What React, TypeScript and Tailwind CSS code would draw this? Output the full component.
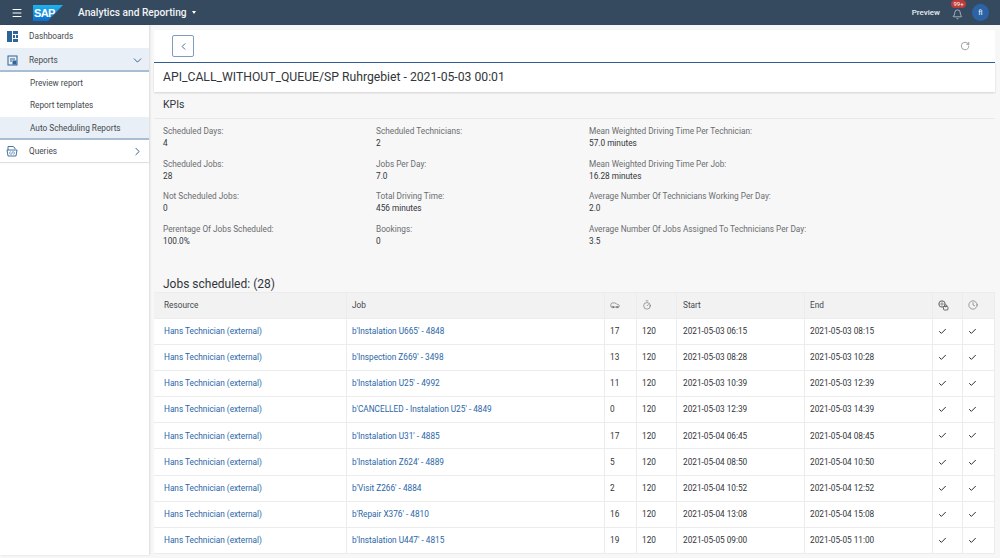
import { Check, ChevronDown, ChevronLeft, ChevronRight, Menu, Bell, RotateCw, Timer, Clock, Car } from 'lucide-react';

const font = { fontFamily: 'Roboto, sans-serif' };

const kpis = [
  [
    ['Scheduled Days:', '4'],
    ['Scheduled Jobs:', '28'],
    ['Not Scheduled Jobs:', '0'],
    ['Perentage Of Jobs Scheduled:', '100.0%'],
  ],
  [
    ['Scheduled Technicians:', '2'],
    ['Jobs Per Day:', '7.0'],
    ['Total Driving Time:', '456 minutes'],
    ['Bookings:', '0'],
  ],
  [
    ['Mean Weighted Driving Time Per Technician:', '57.0 minutes'],
    ['Mean Weighted Driving Time Per Job:', '16.28 minutes'],
    ['Average Number Of Technicians Working Per Day:', '2.0'],
    ['Average Number Of Jobs Assigned To Technicians Per Day:', '3.5'],
  ],
];

const jobs = [
  ["b'Instalation U665' - 4848", '17', '2021-05-03 06:15', '2021-05-03 08:15'],
  ["b'Inspection Z669' - 3498", '13', '2021-05-03 08:28', '2021-05-03 10:28'],
  ["b'Instalation U25' - 4992", '11', '2021-05-03 10:39', '2021-05-03 12:39'],
  ["b'CANCELLED - Instalation U25' - 4849", '0', '2021-05-03 12:39', '2021-05-03 14:39'],
  ["b'Instalation U31' - 4885", '17', '2021-05-04 06:45', '2021-05-04 08:45'],
  ["b'Instalation Z624' - 4889", '5', '2021-05-04 08:50', '2021-05-04 10:50'],
  ["b'Visit Z266' - 4884", '2', '2021-05-04 10:52', '2021-05-04 12:52'],
  ["b'Repair X376' - 4810", '16', '2021-05-04 13:08', '2021-05-04 15:08'],
  ["b'Instalation U447' - 4815", '19', '2021-05-05 09:00', '2021-05-05 11:00'],
];

const cols = 'grid grid-cols-[193px_258px_32px_40px_128px_128px_30px_32px]';
const cell = 'flex items-center pl-[5px] border-r border-[#ececec] overflow-hidden whitespace-nowrap';

const DashIcon = () => (
  <svg width="11" height="11" viewBox="0 0 11 11" fill="#2f6497">
    <rect x="0" y="0" width="5" height="11" />
    <rect x="6" y="0" width="5" height="3" />
    <rect x="6" y="4" width="2" height="3" />
    <rect x="9" y="4" width="2" height="3" />
    <rect x="6" y="8" width="5" height="3" />
  </svg>
);

const ReportIcon = () => (
  <svg width="11" height="11" viewBox="0 0 11 11" fill="none" stroke="#2f6497" strokeWidth="1">
    <rect x="1" y="1" width="9" height="9" />
    <path d="M3 4h5M3 6h2" />
    <rect x="6" y="6" width="3" height="3" fill="#2f6497" />
  </svg>
);

const QueryIcon = () => (
  <svg width="12" height="12" viewBox="0 0 12 12" fill="none" stroke="#2f6497" strokeWidth="0.9">
    <path d="M2 5V1.500h5L9 3v1" />
    <path d="M1 5l1 6h8l1-6z" />
    <path d="M4.500 6.500L3.500 8l1 1.500M7.500 6.500L8.500 8l-1 1.500M6.500 6.500L5.500 9.500" strokeWidth="0.7" />
  </svg>
);

const SapLogo = () => (
  <svg width="30" height="16" viewBox="0 0 30 16">
    <defs>
      <linearGradient id="sap" x1="0" y1="0" x2="0" y2="1">
        <stop offset="0" stopColor="#1eb4ee" />
        <stop offset="1" stopColor="#0a6ed1" />
      </linearGradient>
    </defs>
    <path d="M0 0h30L15 16H0z" fill="url(#sap)" />
    <text x="1" y="12" fontSize="11" fontWeight="800" fill="#fff" fontFamily="Liberation Sans, sans-serif" letterSpacing="-0.6">
      SAP
    </text>
  </svg>
);

const PinIcon = () => (
  <svg width="11" height="11" viewBox="0 0 11 11" fill="none" stroke="#44494e" strokeWidth="0.8">
    <circle cx="4" cy="4" r="3.200" />
    <path d="M1 4h6M4 1v6" strokeWidth="0.5" />
    <rect x="5.500" y="6.500" width="4.500" height="3.500" rx="1" fill="#f2f2f2" />
    <circle cx="7.800" cy="5.800" r="1" fill="#f2f2f2" />
  </svg>
);

export default function App() {
  return (
    <div className="w-[1000px] h-[558px] overflow-hidden flex flex-col bg-[#f7f7f7] text-[#32363a]" style={font}>
      <header className="h-[25px] shrink-0 bg-[#354a5f] flex items-center text-white">
        <Menu className="ml-[11px] w-[12px] h-[12px]" strokeWidth={2} />
        <div className="ml-[10px] flex"><SapLogo /></div>
        <span className="ml-[15px] text-[10.200px] font-medium text-[#f2f4f6]">Analytics and Reporting</span>
        <span className="ml-[5px] w-0 h-0 border-x-[2.500px] border-x-transparent border-t-[3px] border-t-white" />
        <span className="ml-auto text-[8px] font-medium text-[#e8edf2]">Preview</span>
        <div className="relative ml-[12px] w-[11px] h-[11px] mt-[3px]">
          <Bell className="w-[11px] h-[11px]" strokeWidth={1.200} />
          <span className="absolute -top-[9px] -left-[1px] h-[8px] px-[2.500px] rounded-[4px] bg-[#bb3b3b] text-[6px] leading-[8px] text-white">99+</span>
        </div>
        <div className="ml-[9px] mr-[11px] w-[17px] h-[17px] rounded-full bg-[#2c63a6] flex items-center justify-center text-[7.500px]">fl</div>
      </header>
      <div className="flex flex-1 min-h-0">
        <aside className="w-[149px] shrink-0 h-[530px] bg-white shadow-[1px_0_2px_rgba(0,0,0,0.12)] text-[8.250px] text-[#44494e]">
          <div className="h-[23px] flex items-center">
            <span className="ml-[7px] w-[22px] flex"><DashIcon /></span>Dashboards
          </div>
          <div className="h-[24px] pt-[2px] flex items-center bg-[#e9eff6] border-b-2 border-[#a9bdd2]">
            <span className="ml-[7px] w-[22px] flex"><ReportIcon /></span>Reports
            <ChevronDown className="ml-auto mr-[5px] w-[13px] h-[13px] text-[#2f6497]" strokeWidth={1.800} />
          </div>
          <div className="h-[22px] flex items-center pl-[30px]">Preview report</div>
          <div className="h-[23px] flex items-center pl-[30px]">Report templates</div>
          <div className="h-[23px] pt-[2px] flex items-center pl-[30px] bg-[#e9eff6] border-b-2 border-[#a9bdd2]">Auto Scheduling Reports</div>
          <div className="h-[22px] flex items-center shadow-[0_1px_1px_rgba(0,0,0,0.12)]">
            <span className="ml-[6px] w-[23px] flex"><QueryIcon /></span>Queries
            <ChevronRight className="ml-auto mr-[5px] w-[13px] h-[13px] text-[#2f6497]" strokeWidth={1.800} />
          </div>
        </aside>
        <main className="flex-1 min-w-0 pl-[5px] pr-[5px] pt-[5px]">
          <div className="bg-white h-[33px] border-b border-[#2f5f93] flex items-center pl-[18px] pr-[25px] justify-between">
            <button className="w-[22px] h-[22px] rounded-[2px] border border-[#7f9cc0] flex items-center justify-center text-[#2f5f93]">
              <ChevronLeft className="w-[11px] h-[11px]" strokeWidth={2} />
            </button>
            <RotateCw className="w-[10px] h-[10px] text-[#6a6d70]" strokeWidth={1.500} />
          </div>
          <div className="bg-white h-[29px] flex items-center pl-[9px] text-[12.200px] shadow-[0_1px_2px_rgba(0,0,0,0.15)]">
            API_CALL_WITHOUT_QUEUE/SP Ruhrgebiet - 2021-05-03 00:01
          </div>
          <div className="h-[27px] flex items-center pl-[9px] text-[10.500px] border-b border-[#e8e8e8]">KPIs</div>
          <div className="grid grid-cols-[213px_213px_1fr] pl-[9px] pt-[6px] text-[8.250px] leading-[12px]">
            {kpis.map((col, i) => (
              <div key={i} className="flex flex-col gap-[8.500px]">
                {col.map(([label, value]) => (
                  <div key={label}>
                    <div className="text-[#6a6d70]">{label}</div>
                    <div>{value}</div>
                  </div>
                ))}
              </div>
            ))}
          </div>
          <h2 className="mt-[29px] pl-[9px] text-[12px] leading-[16px] font-normal">Jobs scheduled: (28)</h2>
          <div className="text-[8.250px]">
            <div className={`${cols} h-[27px] bg-[#f2f2f2] border-y border-[#ececec] text-[#44494e]`}>
              <div className={`${cell} pl-[10px]`}>Resource</div>
              <div className={cell}>Job</div>
              <div className={cell}><Car className="w-[10px] h-[10px] text-[#44494e]" strokeWidth={1.200} /></div>
              <div className={cell}><Timer className="w-[10px] h-[10px] text-[#44494e]" strokeWidth={1.200} /></div>
              <div className={`${cell} pl-[6px]`}>Start</div>
              <div className={cell}>End</div>
              <div className={cell}><PinIcon /></div>
              <div className={cell}><Clock className="w-[10px] h-[10px] text-[#44494e]" strokeWidth={1.200} /></div>
            </div>
            {jobs.map(([job, drive, start, end]) => (
              <div key={job} className={`${cols} h-[26.200px] bg-white border-b border-[#ececec]`}>
                <div className={`${cell} pl-[10px] text-[#2a66a8]`}>Hans Technician (external)</div>
                <div className={`${cell} text-[#2a66a8]`}>{job}</div>
                <div className={cell}>{drive}</div>
                <div className={cell}>120</div>
                <div className={`${cell} pl-[6px]`}>{start}</div>
                <div className={cell}>{end}</div>
                <div className={cell}><Check className="w-[9px] h-[9px] text-[#222]" strokeWidth={2.500} /></div>
                <div className={cell}><Check className="w-[9px] h-[9px] text-[#222]" strokeWidth={2.500} /></div>
              </div>
            ))}
          </div>
        </main>
      </div>
    </div>
  );
}
